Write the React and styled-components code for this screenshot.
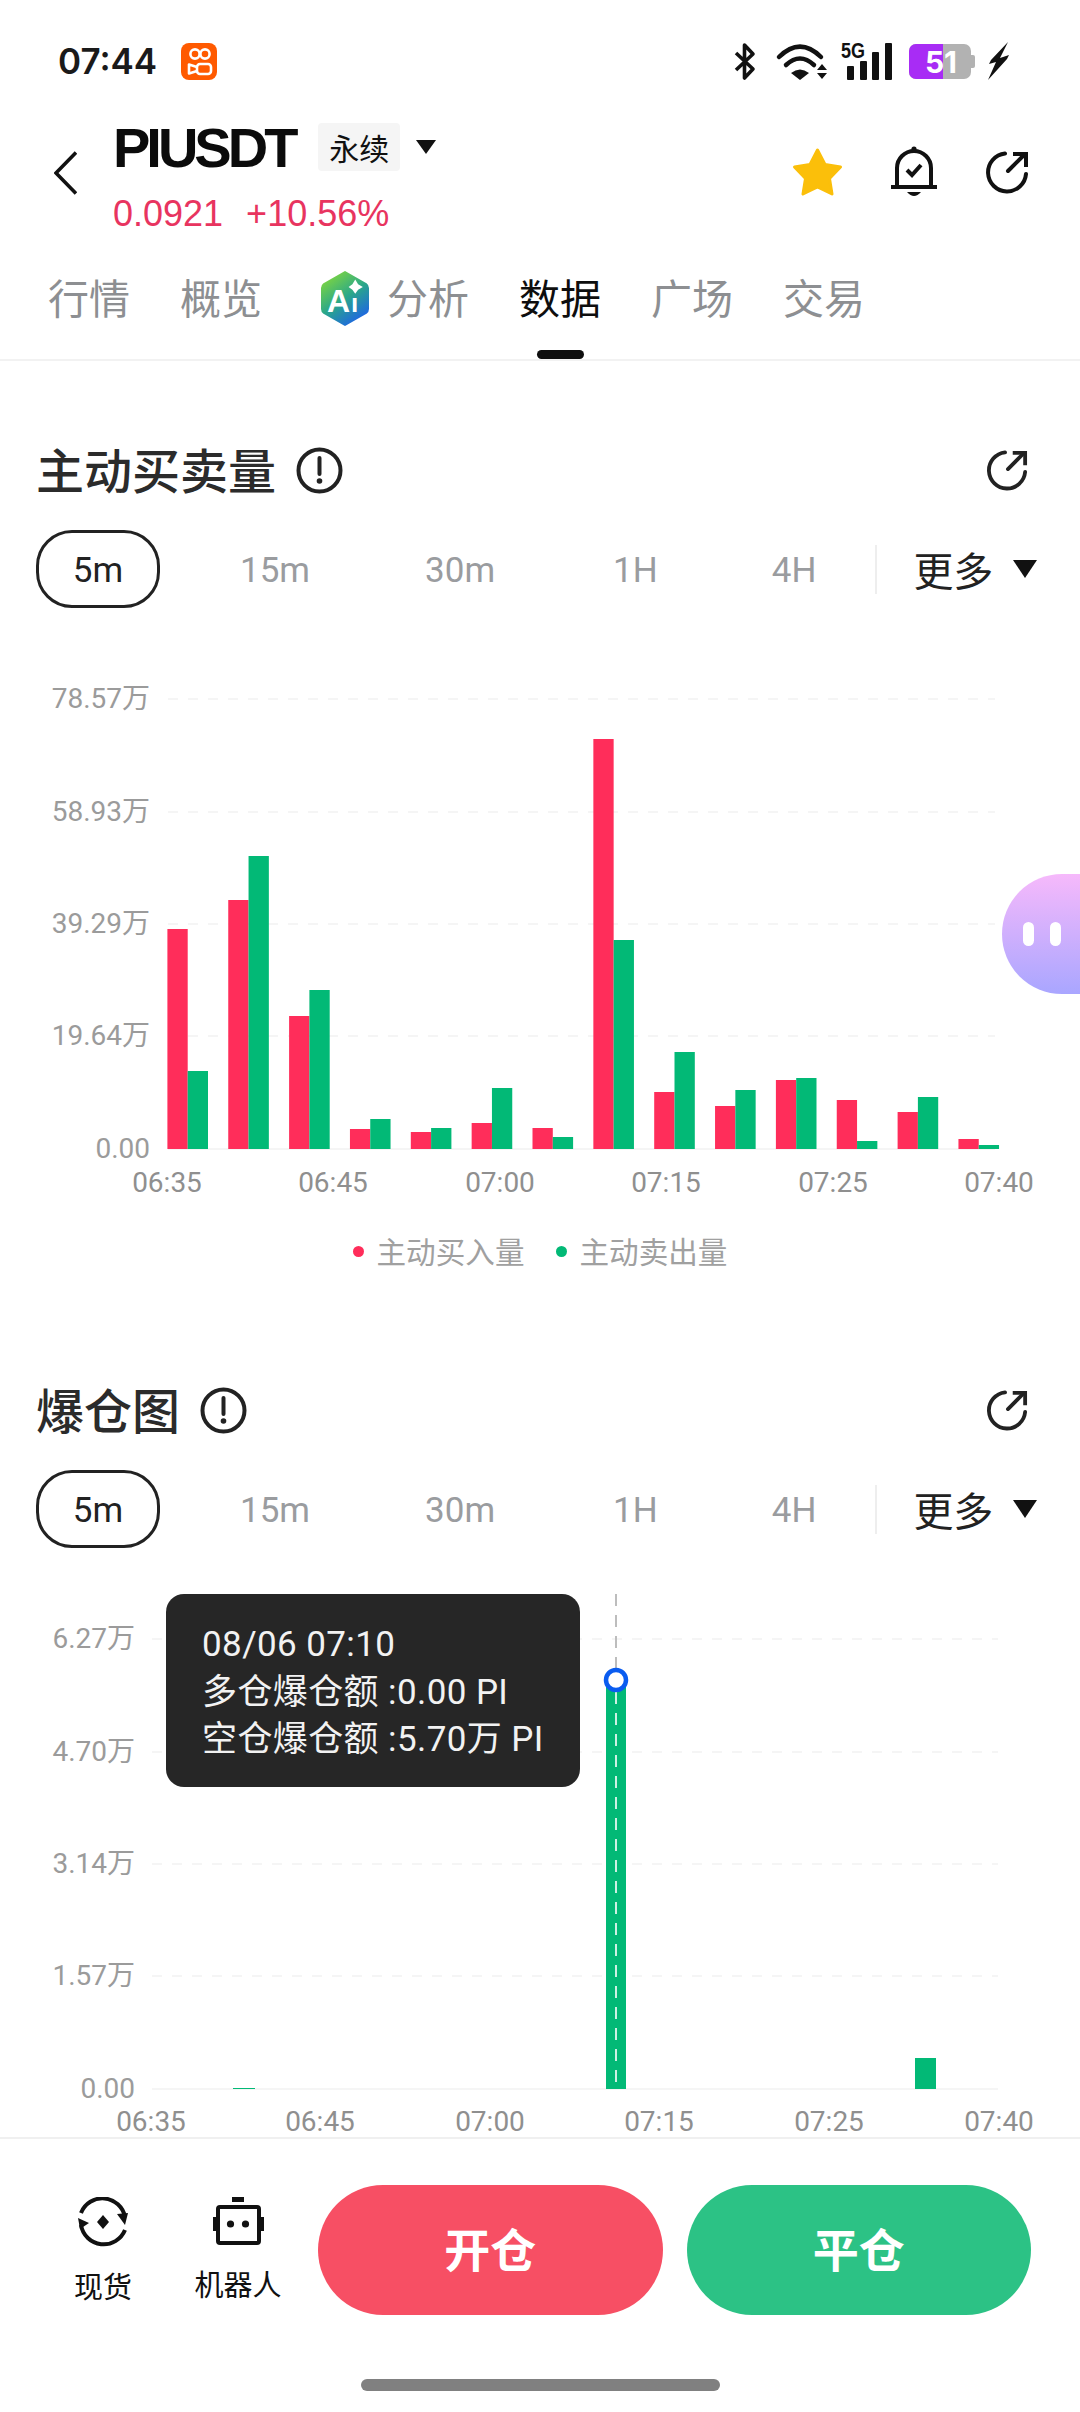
import React from 'react';
import styled, { createGlobalStyle } from 'styled-components';

const CJK = '"Noto Sans CJK SC", "Noto Sans", sans-serif';

const GlobalStyle = createGlobalStyle`
  html, body {
    margin: 0;
    padding: 0;
    background: #fff;
  }
  body {
    font-family: Roboto, ${CJK};
  }
`;

const Page = styled.div`
  position: relative;
  width: 1080px;
  height: 2412px;
  display: flex;
  flex-direction: column;
  overflow: hidden;
  background: #fff;
`;

const StatusBar = styled.div`
  flex: none;
  height: 120px;
  box-sizing: border-box;
  padding: 2px 71px 0 58px;
  display: flex;
  align-items: center;
`;

const Time = styled.span`
  font: 600 35px Inter, sans-serif;
  color: #1a1a1a;
`;

const AppBadge = styled.svg`
  margin-left: 24px;
`;

const StatusIcons = styled.div`
  margin-left: auto;
  display: flex;
  align-items: center;
`;

const StatusIcon = styled.svg`
  display: block;
  margin-left: ${(p) => p.$gap || 0}px;
  overflow: visible;
`;

const Header = styled.div`
  flex: none;
  height: 120px;
  box-sizing: border-box;
  padding: 0 51px 0 54px;
  display: flex;
  align-items: flex-start;
`;

const BackIcon = styled.svg`
  margin-top: 31px;
`;

const TitleColumn = styled.div`
  margin-left: 36px;
  display: flex;
  flex-direction: column;
  gap: 20px;
`;

const TitleRow = styled.div`
  height: 54px;
  display: flex;
  align-items: center;
`;

const Symbol = styled.span`
  font: 700 56px "Liberation Sans", Arial, sans-serif;
  letter-spacing: -4px;
  color: #0b0b0b;
`;

const Badge = styled.span`
  margin-left: 24px;
  width: 82px;
  height: 48px;
  display: flex;
  align-items: center;
  justify-content: center;
  background: #f5f5f5;
  border-radius: 4px;
  font: 400 30px ${CJK};
  color: #111;
`;

const Caret = styled.span`
  width: 0;
  height: 0;
  margin-left: ${(p) => p.$gap || 16}px;
  border-left: ${(p) => p.$w || 10}px solid transparent;
  border-right: ${(p) => p.$w || 10}px solid transparent;
  border-top: ${(p) => p.$h || 14}px solid #111;
`;

const PriceRow = styled.div`
  display: flex;
  gap: 23px;
  font: 400 36px/40px "Liberation Sans", Arial, sans-serif;
  color: #e8345f;
`;

const HeaderActions = styled.div`
  margin-left: auto;
  margin-top: 26px;
  display: flex;
  align-items: center;
  gap: 48px;
`;

const Tabs = styled.div`
  position: relative;
  flex: none;
  height: 121px;
  box-sizing: border-box;
  padding: 31px 0 0 48px;
  display: flex;
  align-items: flex-start;
  gap: 50px;
  border-bottom: 2px solid #f2f2f2;
`;

const Tab = styled.div`
  position: relative;
  display: flex;
  align-items: center;
  gap: 17px;
  height: 50px;
  font: 400 41px/50px ${CJK};
  color: ${(p) => (p.$active ? '#0e0e0e' : '#8d8f92')};
  margin-left: ${(p) => p.$offset || 0}px;

  ${(p) =>
    p.$active &&
    `&::after {
      content: '';
      position: absolute;
      left: 18px;
      bottom: -38px;
      width: 47px;
      height: 9px;
      border-radius: 5px;
      background: #0e0e0e;
    }`}
`;

const LogoSvg = styled.svg`
  margin-top: 5px;
`;

const Content = styled.div`
  flex: 1;
  min-height: 0;
  overflow: hidden;
  padding-top: 74px;
`;

const Section = styled.section`
  height: 940px;
  display: flex;
  flex-direction: column;
`;

const SectionHeader = styled.div`
  height: 70px;
  padding: 0 52px 0 36px;
  display: flex;
  align-items: center;
  gap: 20px;
  flex: none;
`;

const SectionTitle = styled.h2`
  margin: -4px 0 0;
  font: 500 48px/70px ${CJK};
  color: #2b2b2b;
`;

const ShareWrap = styled.div`
  margin-left: auto;
  display: flex;
`;

const IntervalRow = styled.div`
  flex: none;
  height: 78px;
  margin: 25px 0 12px;
  padding-left: 36px;
  display: flex;
  align-items: center;
`;

const Interval = styled.div`
  padding: 3px 58px 0 ${(p) => p.$left}px;
  font: 400 35px/75px Roboto, sans-serif;
  color: #9a9c9f;
`;

const ActiveInterval = styled.div`
  box-sizing: border-box;
  width: 124px;
  height: 78px;
  margin-right: 23px;
  padding-top: 3px;
  display: flex;
  align-items: center;
  justify-content: center;
  border: 3px solid #222;
  border-radius: 36px;
  font: 400 35px Roboto, sans-serif;
  color: #222;
`;

const Divider = styled.div`
  width: 2px;
  height: 49px;
  margin-left: 1px;
  background: #eeeeee;
`;

const More = styled.div`
  margin-left: 36px;
  display: flex;
  align-items: center;
  font: 400 40px/78px ${CJK};
  color: #222;
`;

const ChartWrap = styled.div`
  position: relative;
  flex: none;
`;

const ChartSvg = styled.svg`
  display: block;
`;

const AxisText = styled.text`
  font: 400 28px Roboto, "Noto Sans CJK SC", sans-serif;
  fill: ${(p) => p.$fill || '#9b9b9b'};
`;

const Legend = styled.div`
  margin-top: 18px;
  display: flex;
  justify-content: center;
  gap: 31px;
`;

const LegendItem = styled.div`
  display: flex;
  align-items: center;
  gap: 13px;
  font: 400 29.6px/36px ${CJK};
  color: #a0a0a0;
`;

const LegendDot = styled.span`
  width: 11px;
  height: 11px;
  border-radius: 50%;
  background: ${(p) => p.$color};
`;

const Tooltip = styled.div`
  position: absolute;
  left: 166px;
  top: 34px;
  width: 414px;
  height: 193px;
  box-sizing: border-box;
  padding: 27px 0 0 36px;
  border-radius: 18px;
  background: #262626;
  font: 400 35px/47.5px Roboto, ${CJK};
  letter-spacing: 0.4px;
  color: #f2f2f2;
  white-space: nowrap;
`;

const Assistant = styled.div`
  position: absolute;
  right: 0;
  top: 874px;
  width: 78px;
  height: 120px;
  box-sizing: border-box;
  padding-left: 21px;
  display: flex;
  align-items: center;
  gap: 16px;
  border-radius: 60px 0 0 60px;
  background: linear-gradient(180deg, #f6b9fb 0%, #a9a6ff 100%);
`;

const AssistantEye = styled.span`
  width: 11px;
  height: 24px;
  border-radius: 6px;
  background: #fff;
`;

const BottomBar = styled.div`
  flex: none;
  height: 275px;
  box-sizing: border-box;
  border-top: 2px solid #f0f0f0;
  padding-top: 46px;
  background: #fff;
  display: flex;
  flex-direction: column;
`;

const ActionRow = styled.div`
  height: 130px;
  padding: 0 49px 0 58px;
  display: flex;
  align-items: flex-start;
`;

const NavItem = styled.div`
  width: 90px;
  margin-right: ${(p) => p.$gap}px;
  padding-top: 12px;
  display: flex;
  flex-direction: column;
  align-items: center;
  gap: 21px;
  font: 400 29px/34px ${CJK};
  color: #111;
  white-space: nowrap;
`;

const TradeButtons = styled.div`
  flex: 1;
  display: flex;
  gap: 24px;
`;

const TradeButton = styled.div`
  flex: 1;
  height: 130px;
  box-sizing: border-box;
  padding-bottom: 6px;
  display: flex;
  align-items: center;
  justify-content: center;
  border-radius: 65px;
  background: ${(p) => p.$color};
  font: 700 46px ${CJK};
  color: #fff;
`;

const HomeIndicator = styled.div`
  width: 359px;
  height: 12px;
  margin: 64px auto 0;
  border-radius: 6px;
  background: #808080;
`;

const INTERVALS = [
  ['15m', 57],
  ['30m', 57],
  ['1H', 60],
  ['4H', 56],
];

// tops of each bar in page px, baseline is 1149
const FLOW_BARS = [
  [929, 1071],
  [900, 856],
  [1016, 990],
  [1129, 1119],
  [1132, 1128],
  [1123, 1088],
  [1128, 1137],
  [739, 940],
  [1092, 1052],
  [1106, 1090],
  [1080, 1078],
  [1100, 1141],
  [1112, 1097],
  [1139, 1145],
];

const FLOW_TICKS = [
  ['78.57万', 699],
  ['58.93万', 812],
  ['39.29万', 924],
  ['19.64万', 1036],
  ['0.00', 1149],
];

const LIQ_TICKS = [
  ['6.27万', 1639],
  ['4.70万', 1752],
  ['3.14万', 1864],
  ['1.57万', 1976],
  ['0.00', 2089],
];

const TIMES = ['06:35', '06:45', '07:00', '07:15', '07:25', '07:40'];
const FLOW_TIME_X = [167, 333, 500, 666, 833, 999];
const LIQ_TIME_X = [151, 320, 490, 659, 829, 999];

function ShareIcon({ size = 44, stroke = 4, color = '#111' }) {
  return (
    <svg width={size} height={size} viewBox="0 0 44 44" fill="none" stroke={color} strokeWidth={stroke} strokeLinecap="round">
      <path d="M20 3.5 A19 19 0 1 0 41 24" />
      <path d="M23 21 L39 5" />
      <path d="M28 4 H41 V17" strokeLinecap="butt" />
    </svg>
  );
}

function InfoIcon() {
  return (
    <svg width="47" height="47" viewBox="0 0 47 47" fill="none">
      <circle cx="23.5" cy="23.5" r="21" stroke="#222" strokeWidth="4" />
      <path d="M23.5 11 V27" stroke="#222" strokeWidth="4" strokeLinecap="round" />
      <circle cx="23.5" cy="34" r="2.8" fill="#222" />
    </svg>
  );
}

function Intervals() {
  return (
    <IntervalRow>
      <ActiveInterval>5m</ActiveInterval>
      {INTERVALS.map(([t, left]) => (
        <Interval key={t} $left={left}>
          {t}
        </Interval>
      ))}
      <Divider />
      <More>
        更多
        <Caret $gap={20} $w={12} $h={18} />
      </More>
    </IntervalRow>
  );
}

function SectionTop({ title }) {
  return (
    <SectionHeader>
      <SectionTitle>{title}</SectionTitle>
      <InfoIcon />
      <ShareWrap>
        <ShareIcon size={42} stroke={4} color="#222" />
      </ShareWrap>
    </SectionHeader>
  );
}

function Grid({ ticks, x1, x2, labelX }) {
  return ticks.map(([label, y], i) => (
    <g key={label}>
      <line
        x1={x1}
        x2={x2}
        y1={y}
        y2={y}
        stroke="#f5f5f5"
        strokeWidth="2"
        strokeDasharray={i === ticks.length - 1 ? undefined : '10 10'}
      />
      <AxisText x={labelX} y={y + 9} textAnchor="end">
        {label}
      </AxisText>
    </g>
  ));
}

function TimeAxis({ y, xs }) {
  return TIMES.map((t, i) => (
    <AxisText key={t} x={xs[i]} y={y} textAnchor="middle" $fill="#8f8f8f">
      {t}
    </AxisText>
  ));
}

function FlowChart() {
  const base = 1149;
  return (
    <ChartSvg width="1080" height="595" viewBox="0 620 1080 595">
      <Grid ticks={FLOW_TICKS} x1={168} x2={995} labelX={150} />
      {FLOW_BARS.map(([buy, sell], i) => {
        const x = 167.4 + i * 60.85;
        return (
          <g key={i}>
            <rect x={x} y={buy} width="20.3" height={base - buy} fill="#ff2d5a" />
            <rect x={x + 20.3} y={sell} width="20.3" height={base - sell} fill="#02b976" />
          </g>
        );
      })}
      <TimeAxis y={1192} xs={FLOW_TIME_X} />
    </ChartSvg>
  );
}

function LiquidationChart() {
  const base = 2089;
  return (
    <ChartWrap>
      <ChartSvg width="1080" height="577" viewBox="0 1560 1080 577">
        <Grid ticks={LIQ_TICKS} x1={152} x2={998} labelX={135} />
        <rect x="233" y={base - 1} width="22" height="1" fill="#02b976" />
        <rect x="606" y="1680" width="20" height={base - 1680} fill="#02b976" />
        <rect x="915" y="2058" width="21" height={base - 2058} fill="#02b976" />
        <line x1="616" x2="616" y1="1594" y2="1668" stroke="#bdbdbd" strokeWidth="2" strokeDasharray="12 9" />
        <line x1="616" x2="616" y1="1692" y2={base} stroke="#fff" strokeWidth="1.6" strokeDasharray="12 9" />
        <circle cx="616" cy="1680" r="10" fill="#fff" stroke="#0a5cf0" strokeWidth="4.5" />
        <TimeAxis y={2131} xs={LIQ_TIME_X} />
      </ChartSvg>
      <Tooltip>
        08/06 07:10
        <br />
        多仓爆仓额 :0.00 PI
        <br />
        空仓爆仓额 :5.70万 PI
      </Tooltip>
    </ChartWrap>
  );
}

function AiLogo() {
  return (
    <LogoSvg width="50" height="57" viewBox="0 0 50 57">
      <defs>
        <linearGradient id="aiHex" x1="0.15" y1="0.05" x2="0.75" y2="1">
          <stop offset="0" stopColor="#7ed63f" />
          <stop offset="0.5" stopColor="#2aa78a" />
          <stop offset="1" stopColor="#1d62e8" />
        </linearGradient>
      </defs>
      <path
        d="M25 2 L46 14 Q48 15.5 48 18 V39 Q48 41.5 46 43 L25 55 L4 43 Q2 41.5 2 39 V18 Q2 15.5 4 14 Z"
        fill="url(#aiHex)"
        stroke="url(#aiHex)"
        strokeWidth="2"
        strokeLinejoin="round"
      />
      <text x="7" y="42" fontFamily="Liberation Sans, sans-serif" fontWeight="700" fontSize="32" fill="#fff">
        A
      </text>
      <text x="31" y="42" fontFamily="Liberation Sans, sans-serif" fontWeight="700" fontSize="26" fill="#fff">
        ı
      </text>
      <path d="M35 12 L38 17 L43 20 L38 23 L35 27 L32 23 L28 20 L32 17 Z" fill="#fff" transform="translate(2 -2) scale(0.95)" />
    </LogoSvg>
  );
}

export default function App() {
  return (
    <Page>
      <GlobalStyle />
      <StatusBar>
        <Time>07:44</Time>
        <AppBadge width="36" height="37" viewBox="0 0 36 37" fill="none">
          <rect width="36" height="37" rx="8" fill="#ff5a00" />
          <g stroke="#fff" strokeWidth="2.6">
            <circle cx="14" cy="11" r="4.6" />
            <circle cx="24" cy="11" r="4.6" />
            <rect x="16" y="21" width="14" height="10" rx="3" />
            <path d="M16 24 L8 21.5 V30.5 L16 28" strokeLinejoin="round" />
          </g>
        </AppBadge>
        <StatusIcons>
          <StatusIcon width="21" height="37" viewBox="0 0 21 37" fill="none" stroke="#111" strokeWidth="3.6" strokeLinejoin="round">
            <path d="M2 10 L19 26 L10.5 35 V2 L19 11 L2 27" />
          </StatusIcon>
          <StatusIcon $gap={22} width="50" height="37" viewBox="0 0 50 37" fill="none">
            <path d="M2 14 Q23 -7 44 14" stroke="#111" strokeWidth="4.5" strokeLinecap="round" />
            <path d="M9 22 Q23 9 37 22" stroke="#111" strokeWidth="4.5" strokeLinecap="round" />
            <path d="M14 30 Q23 23 32 30 L23 37 Z" fill="#111" />
            <path d="M40 27 L45 21 L50 27 Z M40 30 H50 L45 36 Z" fill="#111" />
          </StatusIcon>
          <StatusIcon $gap={14} width="51" height="38" viewBox="0 0 51 38">
            <text x="0" y="16" fontFamily="Liberation Sans, sans-serif" fontWeight="700" fontSize="22" textLength="24" lengthAdjust="spacingAndGlyphs" fill="#111">
              5G
            </text>
            <rect x="6" y="24" width="7" height="14" rx="1" fill="#111" />
            <rect x="19" y="19" width="7" height="19" rx="1" fill="#111" />
            <rect x="31" y="10" width="7" height="28" rx="1" fill="#111" />
            <rect x="44" y="1" width="7" height="37" rx="1" fill="#111" />
          </StatusIcon>
          <StatusIcon $gap={17} width="66" height="35" viewBox="0 0 66 35">
            <rect x="0" y="0" width="62" height="35" rx="7" fill="#b2b2b2" />
            <path d="M7 0 H34 V35 H7 A7 7 0 0 1 0 28 V7 A7 7 0 0 1 7 0 Z" fill="#a82cf5" />
            <path d="M62 11 H64 A2 2 0 0 1 66 13 V22 A2 2 0 0 1 64 24 H62 Z" fill="#b2b2b2" />
            <text x="32" y="29" textAnchor="middle" fontFamily="Inter, sans-serif" fontWeight="700" fontSize="30" fill="#fff">
              51
            </text>
          </StatusIcon>
          <StatusIcon $gap={13} width="21" height="38" viewBox="0 0 21 38">
            <path d="M20 0 L3 18 L1 22 L8 20 L0 38 L19 17 L21 13 L12 16 Z" fill="#111" />
          </StatusIcon>
        </StatusIcons>
      </StatusBar>

      <Header>
        <BackIcon width="23" height="44" viewBox="0 0 23 44" fill="none" stroke="#111" strokeWidth="3.6">
          <path d="M22 1.5 L2 22 L22 42.5" />
        </BackIcon>
        <TitleColumn>
          <TitleRow>
            <Symbol>PIUSDT</Symbol>
            <Badge>永续</Badge>
            <Caret />
          </TitleRow>
          <PriceRow>
            <span>0.0921</span>
            <span>+10.56%</span>
          </PriceRow>
        </TitleColumn>
        <HeaderActions>
          <svg width="51" height="50" viewBox="0 0 51 50">
            <path
              d="M25.5 3 L33 17.5 L48.5 20 L37.5 31.5 L40 47 L25.5 40 L11 47 L13.5 31.5 L2.5 20 L18 17.5 Z"
              fill="#fbbf0a"
              stroke="#fbbf0a"
              strokeWidth="3"
              strokeLinejoin="round"
            />
          </svg>
          <svg width="46" height="52" viewBox="0 0 46 52" fill="none">
            <path d="M6 41 V22 A17 17 0 0 1 40 22 V41" stroke="#111" strokeWidth="4" />
            <path d="M0 41 H46" stroke="#111" strokeWidth="4" />
            <circle cx="23" cy="3" r="2.6" fill="#111" />
            <path d="M16 24 L21 29 L30 19" stroke="#111" strokeWidth="4" />
            <path d="M16 46 H30 Q23 54 16 46 Z" fill="#111" />
          </svg>
          <ShareIcon />
        </HeaderActions>
      </Header>

      <Tabs>
        <Tab>行情</Tab>
        <Tab>概览</Tab>
        <Tab $offset={8}>
          <AiLogo />
          分析
        </Tab>
        <Tab $active>数据</Tab>
        <Tab>广场</Tab>
        <Tab>交易</Tab>
      </Tabs>

      <Content>
        <Section>
          <SectionTop title="主动买卖量" />
          <Intervals />
          <FlowChart />
          <Legend>
            <LegendItem>
              <LegendDot $color="#ff2d5a" />
              主动买入量
            </LegendItem>
            <LegendItem>
              <LegendDot $color="#02b976" />
              主动卖出量
            </LegendItem>
          </Legend>
        </Section>
        <Section>
          <SectionTop title="爆仓图" />
          <Intervals />
          <LiquidationChart />
        </Section>
      </Content>

      <BottomBar>
        <ActionRow>
          <NavItem $gap={45}>
            <svg width="50" height="50" viewBox="0 0 50 50" fill="none">
              <path d="M3 16 A23 23 0 0 1 47 20" stroke="#111" strokeWidth="4" />
              <path d="M47 33 A23 23 0 0 1 3 28" stroke="#111" strokeWidth="4" />
              <path d="M39 17 L50 16 L47 28 Z" fill="#111" />
              <path d="M0 21 L11 26 L2 32 Z" fill="#111" />
              <path d="M25 18 L31 25 L25 32 L19 25 Z" fill="#111" />
            </svg>
            现货
          </NavItem>
          <NavItem $gap={35}>
            <svg width="51" height="48" viewBox="0 0 51 48" fill="none">
              <rect x="19" y="0" width="12" height="5" fill="#111" />
              <rect x="5" y="10" width="41" height="36" rx="2" stroke="#111" strokeWidth="4" />
              <rect x="0" y="20" width="4" height="14" fill="#111" />
              <rect x="47" y="20" width="4" height="14" fill="#111" />
              <circle cx="17.5" cy="27" r="3.6" fill="#111" />
              <circle cx="32.5" cy="27" r="3.6" fill="#111" />
            </svg>
            机器人
          </NavItem>
          <TradeButtons>
            <TradeButton $color="#f74f64">开仓</TradeButton>
            <TradeButton $color="#2cc285">平仓</TradeButton>
          </TradeButtons>
        </ActionRow>
        <HomeIndicator />
      </BottomBar>

      <Assistant>
        <AssistantEye />
        <AssistantEye />
      </Assistant>
    </Page>
  );
}
